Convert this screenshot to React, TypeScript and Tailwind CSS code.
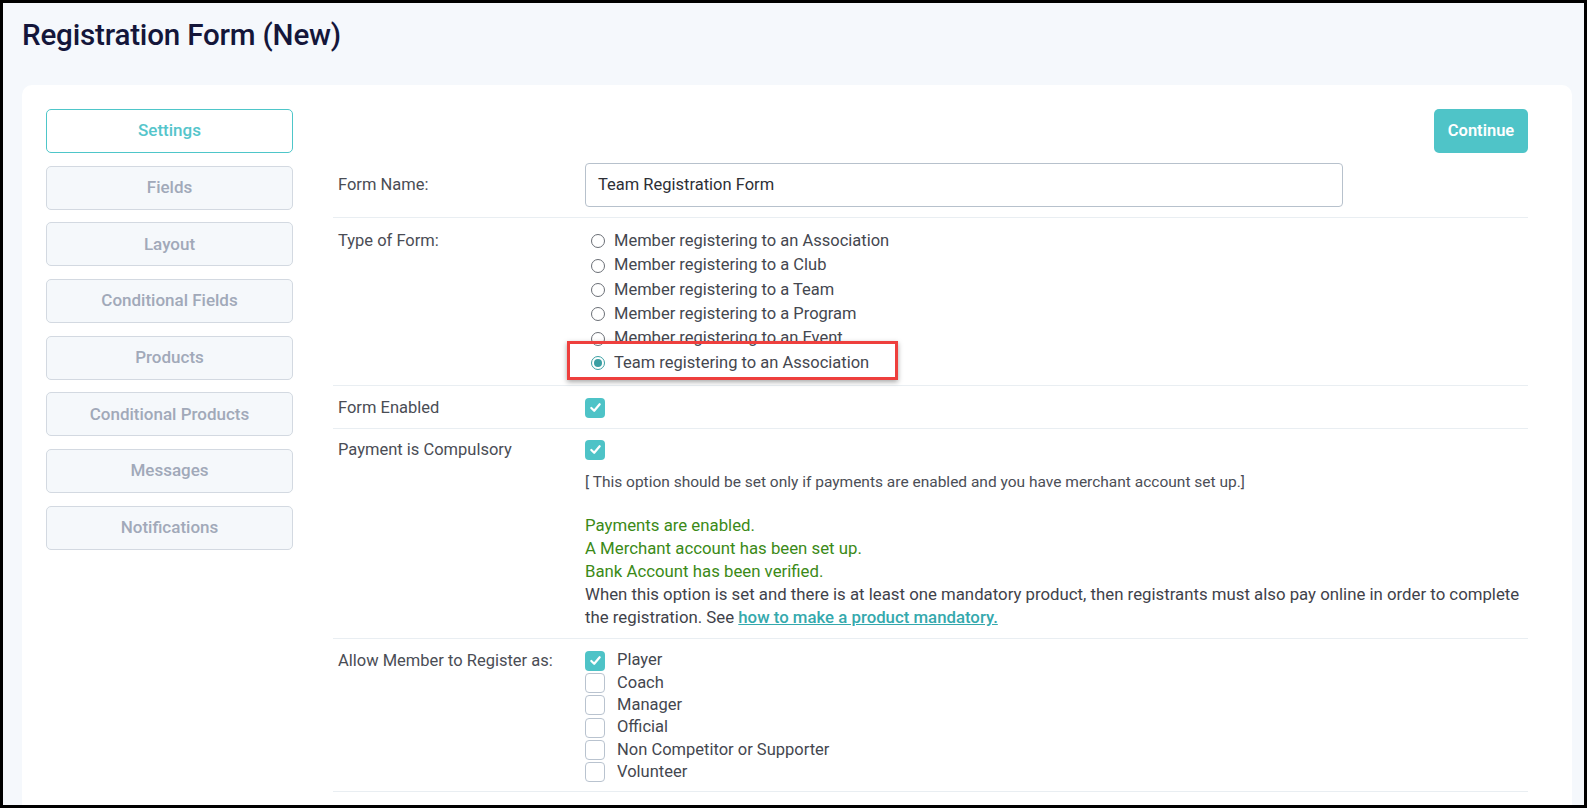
import React from "react";

const font = { fontFamily: "Roboto, 'Noto Sans', sans-serif" };

function Check() {
  return (
    <span className="flex h-[20px] w-[20px] items-center justify-center rounded-[4px] bg-[#4ec3c7]">
      <svg width="13" height="13" viewBox="0 0 14 14" fill="none">
        <path d="M2.5 7.5 L5.6 10.5 L11.5 3.5" stroke="white" strokeWidth="2.4" strokeLinecap="round" strokeLinejoin="round" />
      </svg>
    </span>
  );
}

function EmptyBox() {
  return <span className="block h-[20px] w-[20px] rounded-[4px] border border-[#b9c3cf] bg-white" />;
}

function Radio({ checked }: { checked?: boolean }) {
  return checked ? (
    <span className="flex h-[14px] w-[14px] items-center justify-center rounded-full border border-[#3a9fa3] bg-white">
      <span className="h-[8px] w-[8px] rounded-full bg-[#3a9fa3]" />
    </span>
  ) : (
    <span className="block h-[14px] w-[14px] rounded-full border border-[#6b6f76] bg-white" />
  );
}

const tabs = [
  "Settings",
  "Fields",
  "Layout",
  "Conditional Fields",
  "Products",
  "Conditional Products",
  "Messages",
  "Notifications",
];

const radios = [
  "Member registering to an Association",
  "Member registering to a Club",
  "Member registering to a Team",
  "Member registering to a Program",
  "Member registering to an Event",
];

const roles = ["Player", "Coach", "Manager", "Official", "Non Competitor or Supporter", "Volunteer"];

export default function App() {
  return (
    <div
      className="box-border h-[808px] w-[1587px] overflow-hidden border-[3px] border-black bg-[#f5f8fc]"
      style={font}
    >
      <h1 className="pl-[19px] pt-[14px] text-[29.6px] font-medium leading-[36px] tracking-[-0.2px] text-[#14163a]">
        Registration Form (New)
      </h1>
      <div className="ml-[19px] mr-[12px] mt-[32px] flex h-[760px] gap-[40px] rounded-t-[10px] bg-white pl-[24px] pr-[44px] pt-[24px]">
        {/* sidebar */}
        <div className="flex w-[247px] shrink-0 flex-col gap-[12.7px]">
          {tabs.map((t, i) => (
            <div
              key={t}
              className={
                i === 0
                  ? "flex h-[44px] items-center justify-center rounded-[5px] border border-[#4ec6c9] bg-white text-[17px] font-medium text-[#55c5cb]"
                  : "flex h-[44px] items-center justify-center rounded-[5px] border border-[#d3d9e1] bg-[#f5f8fb] text-[17px] font-medium text-[#a1a9b9]"
              }
            >
              {t}
            </div>
          ))}
        </div>

        {/* content */}
        <div className="flex min-w-0 flex-1 flex-col text-[16.5px] text-[#44474f]">
          <div className="flex justify-end">
            <button className="h-[44px] w-[94px] rounded-[5px] bg-[#4fc4c8] text-[16.5px] font-semibold text-white">
              Continue
            </button>
          </div>

          {/* Form Name */}
          <div className="flex items-center border-b border-[#e9eef2] px-[5px] py-[10px]">
            <div className="w-[247px] shrink-0 text-[#4a4d55]">Form Name:</div>
            <div className="flex h-[44px] w-[758px] items-center rounded-[4px] border border-[#b7c1cc] px-[12px] text-[#2d2f36]">
              Team Registration Form
            </div>
          </div>

          {/* Type of Form */}
          <div className="flex border-b border-[#e9eef2] px-[5px] pb-[9px] pt-[11px]">
            <div className="w-[247px] shrink-0 leading-[24px] text-[#4a4d55]">Type of Form:</div>
            <div className="flex flex-col pl-[6px]">
              {radios.map((r) => (
                <div key={r} className="flex h-[24.4px] items-center gap-[9px]">
                  <Radio />
                  <span>{r}</span>
                </div>
              ))}
              <div className="relative flex h-[24.6px] items-center gap-[9px]">
                <Radio checked />
                <span>Team registering to an Association</span>
                <div className="pointer-events-none absolute left-[-24px] top-[-10px] h-[39px] w-[331px] border-[3px] border-[#ee3f3d] shadow-[0_2px_5px_rgba(0,0,0,0.35)]" />
              </div>
            </div>
          </div>

          {/* Form Enabled */}
          <div className="flex items-center border-b border-[#e9eef2] px-[5px] pb-[9px] pt-[11px]">
            <div className="w-[247px] shrink-0 leading-[22px] text-[#4a4d55]">Form Enabled</div>
            <Check />
          </div>

          {/* Payment is Compulsory */}
          <div className="flex border-b border-[#e9eef2] px-[5px] pb-[8px] pt-[10px]">
            <div className="w-[247px] shrink-0 leading-[22px] text-[#4a4d55]">Payment is Compulsory</div>
            <div className="flex flex-col">
              <div className="flex h-[22px] items-center">
                <Check />
              </div>
              <div className="mt-[10px] text-[15.5px] leading-[23px] text-[#4b4e56]">
                [ This option should be set only if payments are enabled and you have merchant account set up.]
              </div>
              <div className="mt-[20px] text-[16.8px] leading-[23.2px]">
                <div className="text-[#3b8a17]">Payments are enabled.</div>
                <div className="text-[#3b8a17]">A Merchant account has been set up.</div>
                <div className="text-[#3b8a17]">Bank Account has been verified.</div>
                <div className="whitespace-nowrap text-[#3f424a]">
                  When this option is set and there is at least one mandatory product, then registrants must also pay online in order to complete
                </div>
                <div className="text-[#3f424a]">
                  the registration. See{" "}
                  <a className="font-medium text-[#35a9ad] underline">how to make a product mandatory.</a>
                </div>
              </div>
            </div>
          </div>

          {/* Allow Member */}
          <div className="flex border-b border-[#e9eef2] px-[5px] pb-[8px] pt-[11px]">
            <div className="w-[247px] shrink-0 leading-[22px] text-[#4a4d55]">Allow Member to Register as:</div>
            <div className="flex flex-col">
              {roles.map((r, i) => (
                <div key={r} className="flex h-[22.3px] items-center gap-[12px]">
                  {i === 0 ? <Check /> : <EmptyBox />}
                  <span>{r}</span>
                </div>
              ))}
            </div>
          </div>
        </div>
      </div>
    </div>
  );
}
